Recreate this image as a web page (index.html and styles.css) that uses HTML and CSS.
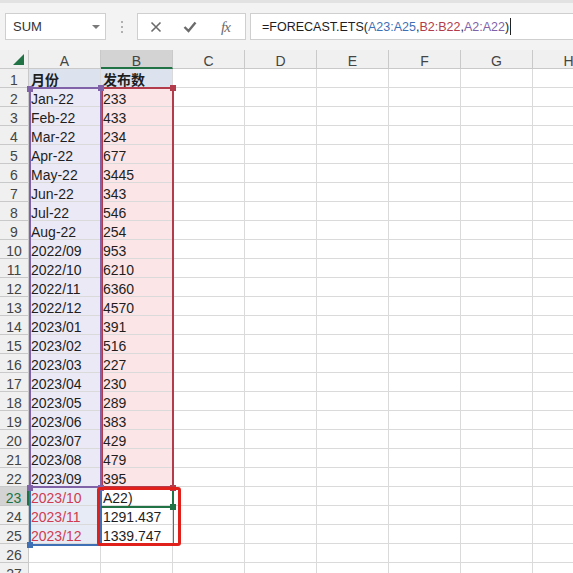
FILE: index.html
```html
<!DOCTYPE html>
<html lang="zh-CN">
<head>
  <meta charset="UTF-8" />
  <title>发布数预测</title>
  <link rel="stylesheet" href="styles.css">
</head>
<body>
  <div class="topline"></div>

  <!-- name box + formula bar -->
  <div class="toolbar">
    <div class="namebox">
      <span>SUM</span>
      <span class="caret-down"></span>
    </div>
    <div class="grip"><i></i><i></i><i></i></div>
    <div class="fnbox">
      <svg class="fn-icon cancel" width="12" height="12" viewBox="0 0 12 12">
        <path d="M1.5 1.5 L10.5 10.5 M10.5 1.5 L1.5 10.5" stroke="#6b6b6b" stroke-width="1.6" fill="none"/>
      </svg>
      <svg class="fn-icon enter" width="14" height="12" viewBox="0 0 14 12">
        <path d="M1.5 6 L5.5 10 L12.5 1.5" stroke="#6b6b6b" stroke-width="2.4" fill="none"/>
      </svg>
      <span class="fn-icon fx">fx</span>
    </div>
    <div class="formula"><span class="formula-text">=FORECAST.ETS(<span class="ref-blue">A23:A25</span>,<span class="ref-red">B2:B22</span>,<span class="ref-purple">A2:A22</span>)</span><span class="text-caret"></span></div>
  </div>

  <!-- worksheet -->
  <div class="sheet" id="sheet">
    <div class="cell corner"><span class="corner-tri"></span></div>
    <div class="cell colhead">A</div>
    <div class="cell colhead active">B</div>
    <div class="cell colhead">C</div>
    <div class="cell colhead">D</div>
    <div class="cell colhead">E</div>
    <div class="cell colhead">F</div>
    <div class="cell colhead">G</div>
    <div class="cell colhead">H</div>

    <!-- range highlights while editing the formula -->
    <div class="range red-range"></div>
    <div class="range purple-range"></div>
    <div class="range blue-range"></div>
    <div class="range sel-range"></div>
    <div class="range active-cell"></div>
    <span class="handle h-purple" style="left:27px;top:36px"></span>
    <span class="handle h-purple" style="left:98px;top:35px"></span>
    <span class="handle h-red" style="left:170px;top:35px"></span>
    <span class="handle h-red" style="left:170px;top:435px"></span>
    <span class="handle h-purple" style="left:27px;top:435px"></span>
    <span class="handle h-purple" style="left:98px;top:435px"></span>
    <span class="handle h-green" style="left:170px;top:454px"></span>
    <span class="handle h-blue" style="left:27px;top:492px"></span>
    <div class="markup"></div>
  </div>

  <script>
    const rows = [
      ['月份', '发布数'],
      ['Jan-22', '233'], ['Feb-22', '433'], ['Mar-22', '234'], ['Apr-22', '677'],
      ['May-22', '3445'], ['Jun-22', '343'], ['Jul-22', '546'], ['Aug-22', '254'],
      ['2022/09', '953'], ['2022/10', '6210'], ['2022/11', '6360'], ['2022/12', '4570'],
      ['2023/01', '391'], ['2023/02', '516'], ['2023/03', '227'], ['2023/04', '230'],
      ['2023/05', '289'], ['2023/06', '383'], ['2023/07', '429'], ['2023/08', '479'],
      ['2023/09', '395'],
      ['2023/10', 'A22)'], ['2023/11', '1291.437'], ['2023/12', '1339.747'],
      ['', ''], ['', '']
    ];

    const sheet = document.getElementById('sheet');
    const firstOverlay = sheet.querySelector('.range');

    rows.forEach((r, i) => {
      const n = i + 1;
      const head = document.createElement('div');
      head.className = 'cell rowhead' + (n === 23 ? ' active' : '');
      head.textContent = n;
      sheet.insertBefore(head, firstOverlay);

      for (let c = 0; c < 8; c++) {
        const cell = document.createElement('div');
        cell.className = 'cell';
        if (c < 2) cell.textContent = r[c];
        if (n === 1 && c < 2) cell.classList.add('title');
        if (n >= 2 && n <= 22 && c === 0) cell.classList.add('bg-purple');
        if (n >= 2 && n <= 22 && c === 1) cell.classList.add('bg-red');
        if (n >= 23 && n <= 25 && c === 0) cell.classList.add('bg-blue', 'forecast');
        sheet.insertBefore(cell, firstOverlay);
      }
    });
  </script>
</body>
</html>
```

FILE: styles.css
```css
:root {
  --grid: #dadada;
  --head-bg: #f0f0f0;
  --head-line: #c9c9c9;
  --green: #217346;
  --purple: #7f62a8;
  --red: #b23b4c;
  --blue: #3f6fb5;
}

* { box-sizing: border-box; }

body {
  margin: 0;
  overflow: hidden;
  background: #fff;
  font-family: "Liberation Sans", "Noto Sans CJK SC", sans-serif;
  color: #1e1e1e;
}

/* TOOLBAR */
.topline {
  height: 3px;
  background: #e2e2e2;
}
.toolbar {
  height: 47px;
  background: #f3f3f3;
  display: flex;
  align-items: flex-start;
  padding: 10px 0 0 5px;
}
.namebox {
  width: 101px; height: 27px;
  background: #fff;
  border: 1px solid #cfcfcf;
  display: flex; align-items: center; justify-content: space-between;
  padding: 0 5px 0 7px;
  font-size: 13px;
  color: #333;
}
.caret-down {
  width: 0; height: 0;
  border-left: 4px solid transparent;
  border-right: 4px solid transparent;
  border-top: 4px solid #7a7a7a;
}
.grip {
  width: 31px; height: 27px;
  display: flex; flex-direction: column;
  align-items: center; justify-content: center;
  gap: 3px;
}
.grip i {
  width: 2px; height: 2px;
  background: #b0b0b0;
}
.fnbox {
  width: 109px; height: 27px;
  background: #fff;
  border: 1px solid #cfcfcf;
  position: relative;
}
.fn-icon {
  position: absolute;
  top: 50%;
  transform: translateY(-50%);
}
.cancel { left: 12px; }
.enter { left: 45px; }
.fx {
  left: 83px;
  font-family: "Liberation Serif", serif;
  font-style: italic;
  font-size: 15px;
  color: #6b6b6b;
  letter-spacing: -1px;
}
.formula {
  flex: 1;
  height: 27px;
  margin-left: 4px;
  background: #fff;
  border: 1px solid #cfcfcf;
  border-right: none;
  display: flex; align-items: center;
  padding-left: 11px;
  font-size: 12.5px;
  color: #1e1e1e;
  white-space: nowrap;
}
.ref-blue { color: var(--blue); }
.ref-red { color: var(--red); }
.ref-purple { color: var(--purple); }
.text-caret {
  width: 1px; height: 17px;
  background: #222;
  margin-left: 1px;
}

/* SHEET */
.sheet {
  position: relative;
  display: grid;
  grid-template-columns: 29px repeat(8, 72px);
  grid-auto-rows: 19px;
  font-size: 14px;
}
.cell {
  border-right: 1px solid var(--grid);
  border-bottom: 1px solid var(--grid);
  padding: 3px 0 0 2px;
  line-height: 17px;
  white-space: nowrap;
}
.corner, .colhead, .rowhead {
  background: var(--head-bg);
  border-color: var(--head-line);
  color: #444;
  text-align: center;
  padding-left: 0;
}
.corner { position: relative; }
.corner-tri {
  position: absolute;
  right: 4px; bottom: 3px;
  width: 0; height: 0;
  border-left: 11px solid transparent;
  border-bottom: 11px solid var(--green);
}
.colhead.active {
  background: #d3d3d3;
  border-bottom: 2px solid var(--green);
}
.rowhead.active {
  background: #d3d3d3;
  border-right: 2px solid var(--green);
  color: var(--green);
}

.title {
  background: #dce3ef;
  font-weight: bold;
}
.bg-purple { background: #ece9f6; }
.bg-red { background: #fbe5e6; }
.bg-blue { background: #e6ebf6; }
.forecast { color: #cf3c4f; }

/* RANGE OVERLAYS */
.range {
  position: absolute;
  pointer-events: none;
}
.red-range {
  left: 101px; top: 37px;
  width: 73px; height: 401px;
  border: 2px solid var(--red);
}
.purple-range {
  left: 29px; top: 37px;
  width: 73px; height: 401px;
  border: 2px solid var(--purple);
}
.blue-range {
  left: 29px; top: 437px;
  width: 73px; height: 59px;
  border: 2px solid var(--blue);
  border-top: none;
}
.sel-range {
  left: 101px; top: 456px;
  width: 73px; height: 40px;
  border-left: 1px solid var(--blue);
  border-right: 1px solid var(--blue);
}
.active-cell {
  left: 101px; top: 437px;
  width: 73px; height: 21px;
  border: 2px solid var(--green);
  border-left: none;
}
.handle {
  position: absolute;
  width: 6px; height: 6px;
}
.h-purple { background: var(--purple); }
.h-red { background: var(--red); }
.h-green { background: var(--green); }
.h-blue { background: var(--blue); }

.markup {
  position: absolute;
  left: 97px; top: 437px;
  width: 84px; height: 59px;
  border: 3px solid #e0201b;
  border-radius: 3px;
}
```
